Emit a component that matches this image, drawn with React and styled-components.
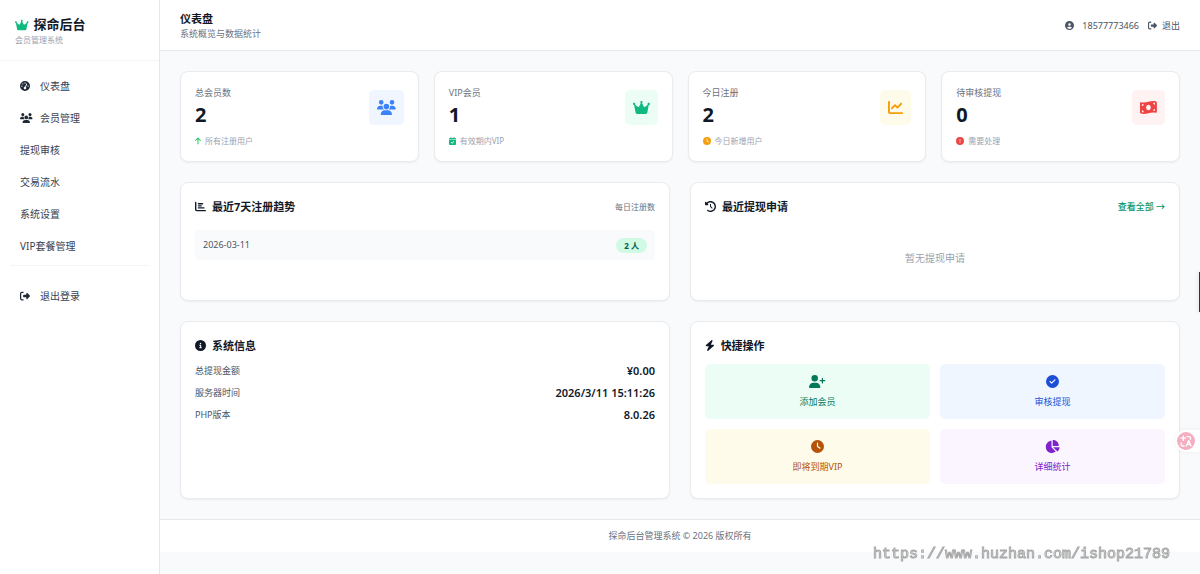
import React from "react";
import styled, { createGlobalStyle, css } from "styled-components";
import {
  FaCrown,
  FaGaugeHigh,
  FaUsers,
  FaRightFromBracket,
  FaCircleUser,
  FaArrowUp,
  FaCalendarCheck,
  FaClock,
  FaCircleExclamation,
  FaChartLine,
  FaMoneyBillWave,
  FaChartBar,
  FaClockRotateLeft,
  FaCircleInfo,
  FaBolt,
  FaUserPlus,
  FaCircleCheck,
  FaChartPie,
} from "react-icons/fa6";

const GlobalStyle = createGlobalStyle`
  *, *::before, *::after { box-sizing: border-box; }
  body {
    margin: 0;
    background: #f9fafb;
    color: #1f2937;
    font-family: "Noto Sans", "Noto Sans CJK SC", sans-serif;
    font-size: 9px;
    line-height: 14px;
  }
  h1, h2, p, ul, dl, dd { margin: 0; padding: 0; }
  ul { list-style: none; }
  a { color: inherit; text-decoration: none; }
`;

/* The icons share one height; their widths follow each drawing's own proportions. */
const iconSize = (px) => css`
  svg {
    display: block;
    flex: none;
    height: ${px}px;
    width: auto;
    aspect-ratio: 1;
  }
  svg[viewBox^="0 0 640"] { aspect-ratio: 640 / 512; }
  svg[viewBox^="0 0 576"] { aspect-ratio: 576 / 512; }
  svg[viewBox^="0 0 448"] { aspect-ratio: 448 / 512; }
  svg[viewBox^="0 0 384"] { aspect-ratio: 384 / 512; }
`;

const Shell = styled.div`
  display: flex;
  min-height: 100vh;
`;

const Sidebar = styled.aside`
  flex: none;
  width: 160px;
  background: #fff;
  border-right: 1px solid #e5e7eb;
`;

const Brand = styled.div`
  padding: 15px 15px 14px;
  border-bottom: 1px solid #f3f4f6;
`;

const BrandName = styled.div`
  display: flex;
  align-items: center;
  gap: 5px;
  font-size: 13px;
  font-weight: 700;
  line-height: 19px;
  color: #111827;
  ${iconSize(12)}
  svg { color: #10b981; }
`;

const BrandNote = styled.p`
  font-size: 8px;
  line-height: 12px;
  color: #9ca3af;
`;

const Nav = styled.nav`
  padding: 10px;
`;

const NavList = styled.ul`
  display: flex;
  flex-direction: column;
  gap: 2px;
`;

const NavLink = styled.a`
  display: flex;
  align-items: center;
  height: 30px;
  padding: 0 10px;
  border-radius: 5px;
  font-size: 10px;
  color: #374151;
  ${iconSize(10)}
  svg { color: #1f2937; }
  &:hover { background: #f3f4f6; }
`;

const NavIcon = styled.span`
  width: 20px;
`;

const NavFooter = styled.div`
  margin-top: 4px;
  padding-top: 15px;
  border-top: 1px solid #f3f4f6;
`;

const Content = styled.div`
  flex: 1;
  min-width: 0;
`;

const TopBar = styled.header`
  display: flex;
  align-items: center;
  justify-content: space-between;
  padding: 11px 20px 10px;
  background: #fff;
  border-bottom: 1px solid #e5e7eb;
`;

const PageTitle = styled.h1`
  font-size: 11px;
  font-weight: 700;
  line-height: 16px;
  color: #111827;
`;

const PageNote = styled.p`
  line-height: 13px;
  color: #6b7280;
`;

const Account = styled.div`
  display: flex;
  align-items: center;
  gap: 9px;
  color: #4b5563;
`;

const AccountPart = styled.span`
  display: flex;
  align-items: center;
  gap: ${(p) => p.$gap}px;
  ${iconSize(9)}
`;

const Main = styled.main`
  display: flex;
  flex-direction: column;
  gap: 20px;
  padding: 20px;
`;

const StatGrid = styled.section`
  display: grid;
  grid-template-columns: repeat(4, 1fr);
  gap: 15px;
`;

const PanelGrid = styled.section`
  display: grid;
  grid-template-columns: repeat(2, 1fr);
  gap: 20px;
`;

const Card = styled.article`
  padding: 14px;
  background: #fff;
  border: 1px solid #e9ebee;
  border-radius: 8px;
  box-shadow: 0 1px 2px rgba(0, 0, 0, 0.05);
`;

const StatTop = styled.div`
  display: flex;
  align-items: center;
  justify-content: space-between;
`;

const StatLabel = styled.p`
  line-height: 13px;
  color: #6b7280;
`;

const StatValue = styled.p`
  margin-top: 3px;
  font-size: 20px;
  font-weight: 700;
  line-height: 26px;
  color: #111827;
`;

const StatBadge = styled.span`
  display: flex;
  align-items: center;
  height: 35px;
  padding: 0 8px;
  border-radius: 5px;
  color: ${(p) => p.$color};
  background: ${(p) => p.$bg};
  ${iconSize(15)}
`;

const StatNote = styled.p`
  display: flex;
  align-items: center;
  gap: 4px;
  margin-top: 7px;
  font-size: 8px;
  line-height: 12px;
  color: #9ca3af;
  ${iconSize(8)}
  svg { color: ${(p) => p.$color}; }
`;

const PanelHead = styled.div`
  display: flex;
  align-items: center;
  justify-content: space-between;
  margin-bottom: ${(p) => (p.$tight ? 9 : 14)}px;
`;

const PanelTitle = styled.h2`
  display: flex;
  align-items: center;
  gap: 6px;
  font-size: 11px;
  font-weight: 700;
  line-height: 19px;
  color: #111827;
  ${iconSize(11)}
`;

const PanelNote = styled.span`
  font-size: 8px;
  color: #6b7280;
`;

const PanelLink = styled.a`
  font-weight: 500;
  color: #059669;
`;

const TrendRow = styled.li`
  display: flex;
  align-items: center;
  justify-content: space-between;
  height: 30px;
  padding: 0 8px;
  border-radius: 4px;
  background: #f9fafb;
  color: #4b5563;
`;

const CountPill = styled.span`
  padding: 0 8px;
  border-radius: 8px;
  background: #d1fae5;
  color: #065f46;
  font-size: 8px;
  font-weight: 700;
  line-height: 15px;
`;

const Empty = styled.p`
  padding: 20px 0;
  text-align: center;
  font-size: 10px;
  line-height: 16px;
  color: #9ca3af;
`;

const InfoList = styled.dl`
  display: flex;
  flex-direction: column;
  gap: 8px;
`;

const InfoRow = styled.div`
  display: flex;
  justify-content: space-between;
  dt {
    line-height: 13px;
    color: #4b5563;
  }
  dd {
    font-size: 11px;
    font-weight: 600;
    color: #111827;
  }
`;

const ActionGrid = styled.div`
  display: grid;
  grid-template-columns: repeat(2, 1fr);
  gap: 10px;
`;

const Action = styled.a`
  display: flex;
  flex-direction: column;
  align-items: center;
  gap: 7px;
  padding: 11px 10px 10px;
  border-radius: 5px;
  color: ${(p) => p.$color};
  background: ${(p) => p.$bg};
  ${iconSize(13)}
`;

const Footer = styled.footer`
  padding: 9px 20px;
  background: #fff;
  border-top: 1px solid #e5e7eb;
  text-align: center;
  color: #6b7280;
`;

const Watermark = styled.div`
  position: fixed;
  right: 30px;
  bottom: 9px;
  font-family: "Liberation Mono", monospace;
  font-size: 15px;
  line-height: 20px;
  color: #f3f3f3;
  -webkit-text-stroke: 1px #a8a8a8;
  pointer-events: none;
`;

const EdgeHandle = styled.div`
  position: fixed;
  right: 0;
  top: 272px;
  width: 1px;
  height: 40px;
  background: #333;
  box-shadow: 0 0 4px rgba(0, 0, 0, 0.3);
`;

const TranslateButton = styled.button`
  position: fixed;
  right: 0;
  top: 430px;
  display: flex;
  align-items: center;
  width: 25px;
  height: 22px;
  padding: 0 2px;
  border: 0;
  border-radius: 11px 0 0 11px;
  background: #fff;
  box-shadow: 0 0 5px rgba(0, 0, 0, 0.06);
`;

const TranslateGlyph = () => (
  <svg width="18" height="18" viewBox="0 0 18 18" aria-hidden="true">
    <circle cx="9" cy="9" r="9" fill="#f4adc1" />
    <g fill="none" stroke="#fff" strokeWidth="1.3" strokeLinecap="round" strokeLinejoin="round">
      <path d="M6.3 3.8v4.6M4 6.1h4.6" />
      <path d="M10 4.6h2.2a1.3 1.3 0 0 1 1.3 1.3v1.4" />
      <path d="M4.2 10.8v1.6a1.6 1.6 0 0 0 1.6 1.6h1.4" />
      <path d="M9.4 14l2.3-5.4L14 14M10.2 12.3h3" />
    </g>
  </svg>
);

const navItems = [
  { label: "仪表盘", icon: FaGaugeHigh },
  { label: "会员管理", icon: FaUsers },
  { label: "提现审核" },
  { label: "交易流水" },
  { label: "系统设置" },
  { label: "VIP套餐管理" },
];

const stats = [
  { label: "总会员数", value: "2", note: "所有注册用户", icon: FaUsers, noteIcon: FaArrowUp, color: "#3b82f6", bg: "#eff6ff", noteColor: "#22c55e" },
  { label: "VIP会员", value: "1", note: "有效期内VIP", icon: FaCrown, noteIcon: FaCalendarCheck, color: "#10b981", bg: "#ecfdf5", noteColor: "#10b981" },
  { label: "今日注册", value: "2", note: "今日新增用户", icon: FaChartLine, noteIcon: FaClock, color: "#f59e0b", bg: "#fffbeb", noteColor: "#f59e0b" },
  { label: "待审核提现", value: "0", note: "需要处理", icon: FaMoneyBillWave, noteIcon: FaCircleExclamation, color: "#ef4444", bg: "#fef2f2", noteColor: "#ef4444" },
];

const info = [
  ["总提现金额", "¥0.00"],
  ["服务器时间", "2026/3/11 15:11:26"],
  ["PHP版本", "8.0.26"],
];

const actions = [
  { label: "添加会员", icon: FaUserPlus, color: "#047857", bg: "#ecfdf5" },
  { label: "审核提现", icon: FaCircleCheck, color: "#1d4ed8", bg: "#eff6ff" },
  { label: "即将到期VIP", icon: FaClock, color: "#b45309", bg: "#fffbeb" },
  { label: "详细统计", icon: FaChartPie, color: "#7e22ce", bg: "#faf5ff" },
];

export default function App() {
  return (
    <>
      <GlobalStyle />
      <Shell lang="zh-CN">
        <Sidebar>
          <Brand>
            <BrandName>
              <FaCrown />
              探命后台
            </BrandName>
            <BrandNote>会员管理系统</BrandNote>
          </Brand>
          <Nav>
            <NavList>
              {navItems.map(({ label, icon: Icon }) => (
                <li key={label}>
                  <NavLink href="#">
                    {Icon && (
                      <NavIcon>
                        <Icon />
                      </NavIcon>
                    )}
                    {label}
                  </NavLink>
                </li>
              ))}
            </NavList>
            <NavFooter>
              <NavLink href="#">
                <NavIcon>
                  <FaRightFromBracket />
                </NavIcon>
                退出登录
              </NavLink>
            </NavFooter>
          </Nav>
        </Sidebar>

        <Content>
          <TopBar>
            <div>
              <PageTitle>仪表盘</PageTitle>
              <PageNote>系统概览与数据统计</PageNote>
            </div>
            <Account>
              <AccountPart $gap={8}>
                <FaCircleUser />
                18577773466
              </AccountPart>
              <AccountPart as="a" href="#" $gap={5}>
                <FaRightFromBracket />
                退出
              </AccountPart>
            </Account>
          </TopBar>

          <Main>
            <StatGrid>
              {stats.map(({ label, value, note, icon: Icon, noteIcon: NoteIcon, color, bg, noteColor }) => (
                <Card key={label}>
                  <StatTop>
                    <div>
                      <StatLabel>{label}</StatLabel>
                      <StatValue>{value}</StatValue>
                    </div>
                    <StatBadge $color={color} $bg={bg}>
                      <Icon />
                    </StatBadge>
                  </StatTop>
                  <StatNote $color={noteColor}>
                    <NoteIcon />
                    {note}
                  </StatNote>
                </Card>
              ))}
            </StatGrid>

            <PanelGrid>
              <Card>
                <PanelHead>
                  <PanelTitle>
                    <FaChartBar />
                    最近7天注册趋势
                  </PanelTitle>
                  <PanelNote>每日注册数</PanelNote>
                </PanelHead>
                <ul>
                  <TrendRow>
                    2026-03-11
                    <CountPill>2 人</CountPill>
                  </TrendRow>
                </ul>
              </Card>
              <Card>
                <PanelHead>
                  <PanelTitle>
                    <FaClockRotateLeft />
                    最近提现申请
                  </PanelTitle>
                  <PanelLink href="#">查看全部 →</PanelLink>
                </PanelHead>
                <Empty>暂无提现申请</Empty>
              </Card>
            </PanelGrid>

            <PanelGrid>
              <Card>
                <PanelHead $tight>
                  <PanelTitle>
                    <FaCircleInfo />
                    系统信息
                  </PanelTitle>
                </PanelHead>
                <InfoList>
                  {info.map(([term, value]) => (
                    <InfoRow key={term}>
                      <dt>{term}</dt>
                      <dd>{value}</dd>
                    </InfoRow>
                  ))}
                </InfoList>
              </Card>
              <Card>
                <PanelHead $tight>
                  <PanelTitle>
                    <FaBolt />
                    快捷操作
                  </PanelTitle>
                </PanelHead>
                <ActionGrid>
                  {actions.map(({ label, icon: Icon, color, bg }) => (
                    <Action key={label} href="#" $color={color} $bg={bg}>
                      <Icon />
                      {label}
                    </Action>
                  ))}
                </ActionGrid>
              </Card>
            </PanelGrid>
          </Main>

          <Footer>探命后台管理系统 © 2026 版权所有</Footer>
        </Content>
      </Shell>
      <EdgeHandle />
      <TranslateButton type="button" aria-label="翻译">
        <TranslateGlyph />
      </TranslateButton>
      <Watermark>https://www.huzhan.com/ishop21789</Watermark>
    </>
  );
}
